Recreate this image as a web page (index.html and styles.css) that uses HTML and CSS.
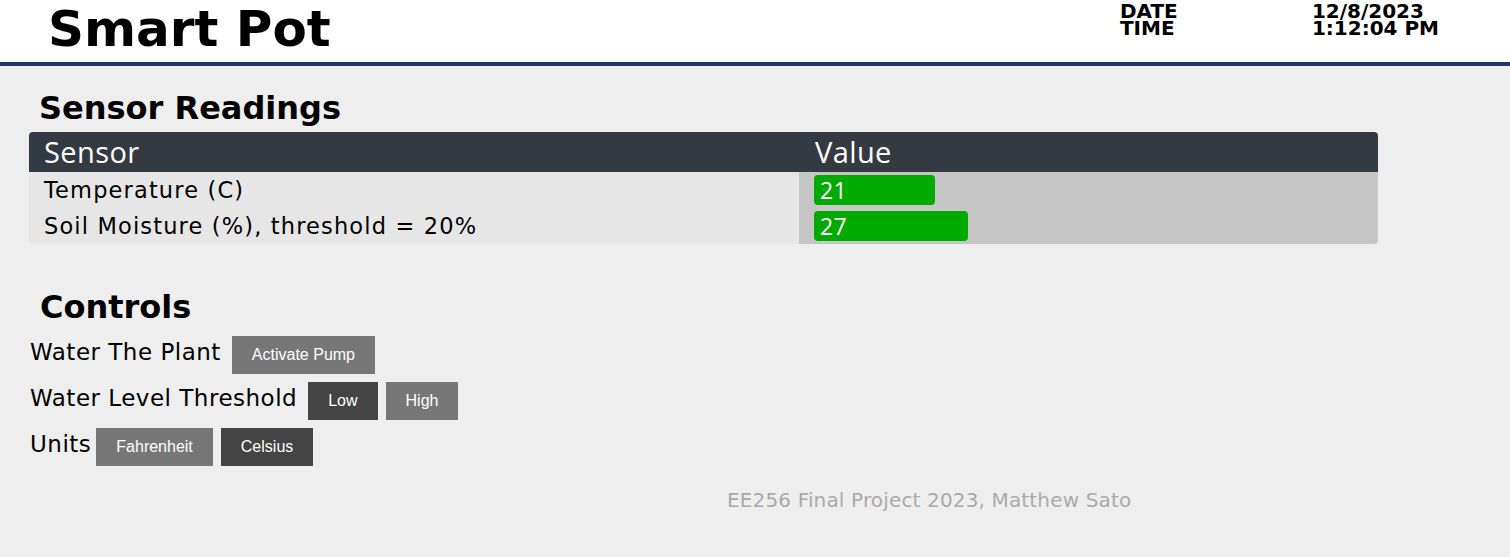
FILE: index.html
```html
<!DOCTYPE html>
<html>
<head>
<meta charset="utf-8">
<title>Smart Pot</title>
<link rel="stylesheet" href="styles.css">
</head>
<body>
<header class="topbar">
  <h1 class="title">Smart Pot</h1>
  <div class="clock">
    <div class="clock-labels">
      <div>DATE</div>
      <div>TIME</div>
    </div>
    <div class="clock-values">
      <div>12/8/2023</div>
      <div>1:12:04 PM</div>
    </div>
  </div>
</header>
<main class="content">
  <h2 class="section-title readings-title">Sensor Readings</h2>
  <div class="table">
    <div class="th th-sensor">Sensor</div>
    <div class="th th-value">Value</div>
    <div class="td td-sensor">Temperature (C)</div>
    <div class="td td-value"><span class="bar" style="width:121px">21</span></div>
    <div class="td td-sensor">Soil Moisture (%), threshold = 20%</div>
    <div class="td td-value"><span class="bar" style="width:154px">27</span></div>
  </div>

  <h2 class="section-title controls-title">Controls</h2>
  <div class="controls">
    <div class="control-row">
      <span class="control-label">Water The Plant</span>
      <button class="btn btn-light">Activate Pump</button>
    </div>
    <div class="control-row">
      <span class="control-label">Water Level Threshold</span>
      <button class="btn btn-dark">Low</button>
      <button class="btn btn-light">High</button>
    </div>
    <div class="control-row">
      <span class="control-label units">Units</span>
      <button class="btn btn-light">Fahrenheit</button>
      <button class="btn btn-dark">Celsius</button>
    </div>
  </div>
  <footer class="footer">EE256 Final Project 2023, Matthew Sato</footer>
</main>
</body>
</html>
```
FILE: styles.css
```css
html, body {
  margin: 0;
  padding: 0;
}
body {
  background: #eeeeee;
  font-family: "DejaVu Sans", Verdana, sans-serif;
  color: #000;
}
.topbar {
  background: #ffffff;
  height: 62px;
  border-bottom: 4px solid #27336f;
  display: flex;
  justify-content: space-between;
  align-items: flex-start;
}
.title {
  margin: 0;
  padding-left: 48px;
  font-size: 50px;
  font-weight: bold;
  line-height: 58px;
}
.clock {
  display: flex;
  padding-top: 3px;
  padding-right: 71px;
  font-weight: bold;
  font-size: 20px;
  line-height: 17px;
}
.clock-labels {
  width: 192px;
}
.content {
  padding: 0 29px;
}
.section-title {
  margin: 0;
  padding-left: 11px;
  font-size: 32px;
  line-height: 42px;
  font-weight: bold;
}
.readings-title {
  padding-top: 21px;
  padding-left: 10px;
  margin-bottom: 3px;
}
.table {
  width: 1349px;
  display: grid;
  grid-template-columns: 770px 579px;
  border-radius: 4px;
  overflow: hidden;
  font-family: "Open Sans", "Segoe UI", sans-serif;
}
.th {
  background: #343a42;
  color: #fff;
  height: 40px;
  font-size: 29px;
  line-height: 40px;
  padding-left: 15px;
  letter-spacing: 0.4px;
}
.th-value {
  padding-left: 16px;
}
.td {
  height: 36px;
  display: flex;
  align-items: center;
}
.td-sensor {
  background: #e6e6e6;
  padding-left: 15px;
  font-family: "DejaVu Sans", Verdana, sans-serif;
  font-size: 22.5px;
  letter-spacing: 1.15px;
}
.td-value {
  background: #c6c6c6;
  padding-left: 15px;
}
.bar {
  display: inline-block;
  background: #00aa00;
  color: #fff;
  height: 30px;
  line-height: 30px;
  border-radius: 4px;
  padding-left: 6px;
  box-sizing: border-box;
  font-size: 23px;
  letter-spacing: 0.3px;
}
.controls-title {
  padding-top: 42px;
}
.controls {
  display: flex;
  flex-direction: column;
  gap: 8px;
  padding-top: 8px;
  margin-left: 1px;
}
.control-row {
  display: flex;
  align-items: center;
  gap: 8px;
}
.control-label {
  font-size: 23px;
  letter-spacing: 0.5px;
  margin-right: 3px;
  position: relative;
  top: -3px;
}
.control-label.units {
  margin-right: -3px;
}
.btn {
  border: none;
  color: #fff;
  font-family: "Liberation Sans", Arial, sans-serif;
  font-size: 16px;
  height: 38px;
  padding: 0 20px;
  border-radius: 0;
  cursor: pointer;
}
.btn-light {
  background: #777777;
}
.btn-dark {
  background: #444444;
}
.footer {
  padding: 22px 0 0 698px;
  font-size: 20px;
  letter-spacing: 0.15px;
  color: #aaaaaa;
}
```
